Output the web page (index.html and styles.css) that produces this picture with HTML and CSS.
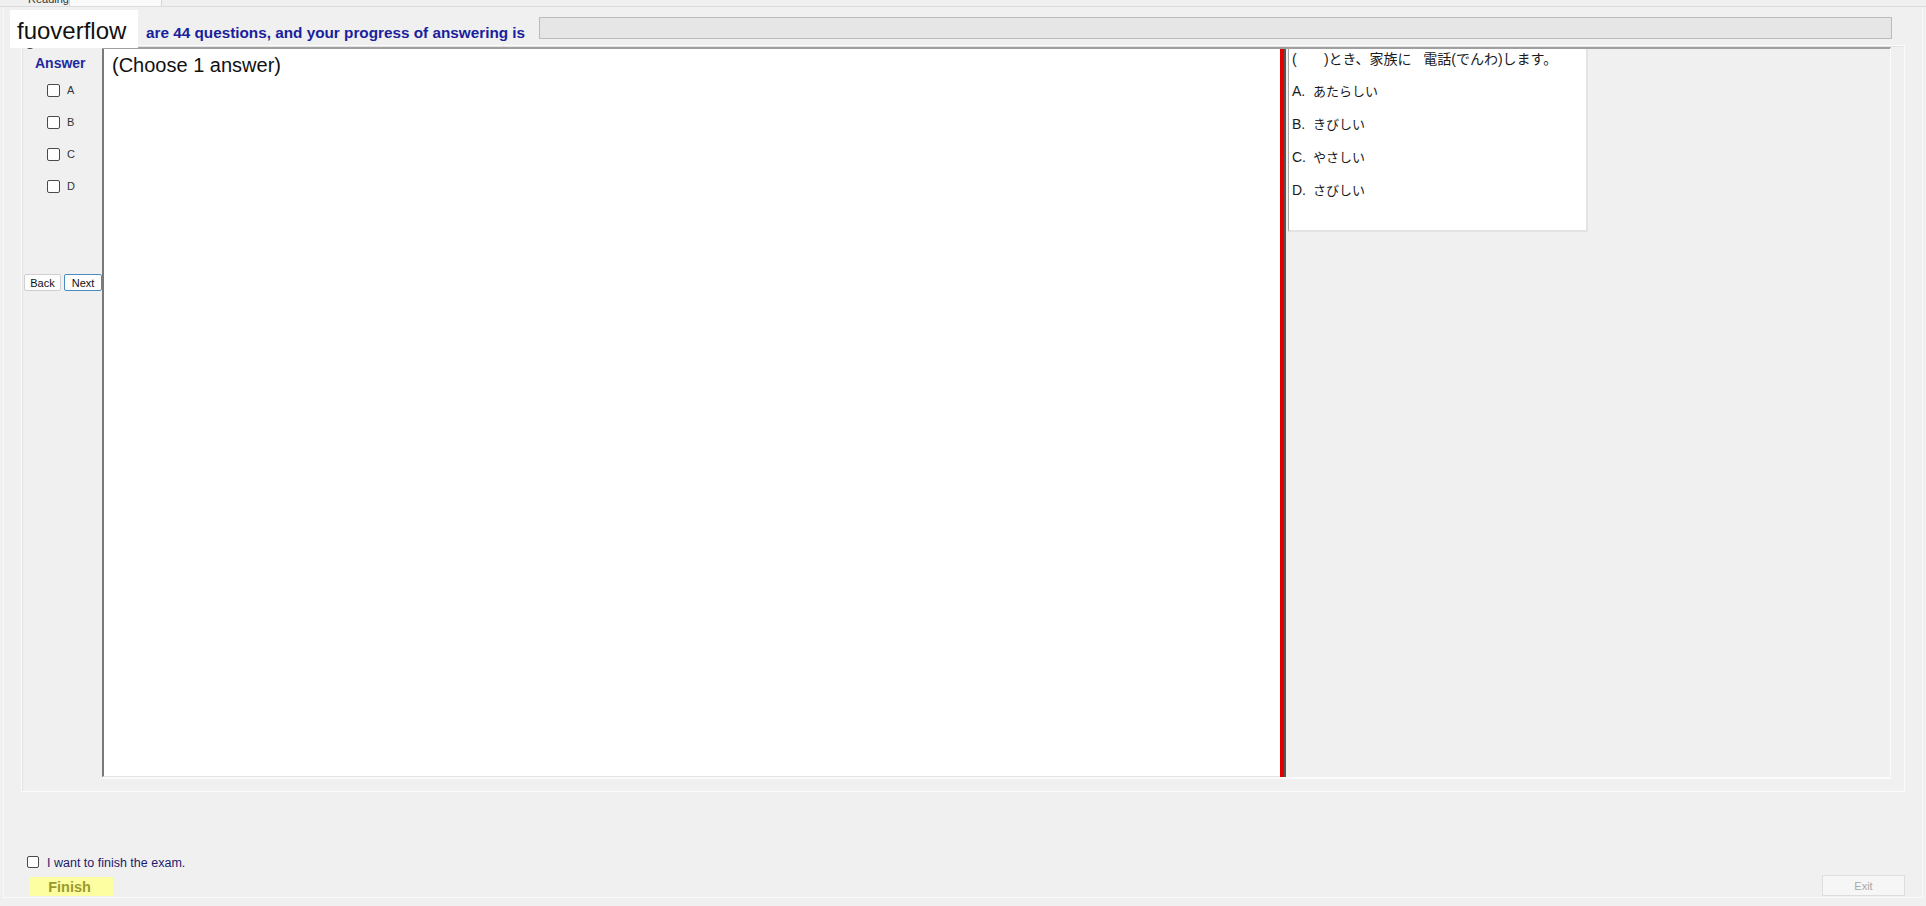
FILE: index.html
```html
<!DOCTYPE html>
<html lang="en">

<head>
    <meta charset="UTF-8">
    <meta name="viewport" content="width=device-width, initial-scale=1.0">
    <title>Exam</title>
    <link rel="stylesheet" href="styles.css">
</head>

<body>
    <div id="tabs">
        <div class="tab">Reading</div>
        <div class="tab tab-on">Vocabulary</div>
    </div>
    <div id="window">
        <div id="head">
            <div class="progress-text">are 44 questions, and your progress of answering is</div>
            <div class="progress"></div>
        </div>
        <div id="group">
            <div id="side">
                <div class="side-title">Answer</div>
                <label class="opt"><input type="checkbox"><span>A</span></label>
                <label class="opt"><input type="checkbox"><span>B</span></label>
                <label class="opt"><input type="checkbox"><span>C</span></label>
                <label class="opt"><input type="checkbox"><span>D</span></label>
                <div class="nav">
                    <button class="btn">Back</button>
                    <button class="btn btn-focus">Next</button>
                </div>
            </div>
            <div id="split">
                <div class="question">(Choose 1 answer)</div>
                <div class="splitter"></div>
                <div class="reading">
                    <div class="passage">
                        <p class="stem">(&nbsp;&nbsp;&nbsp;&nbsp;&nbsp;&nbsp;&nbsp;)とき、家族に&nbsp;&nbsp;&nbsp;電話(でんわ)します。</p>
                        <p><span class="key">A.</span>あたらしい</p>
                        <p><span class="key">B.</span>きびしい</p>
                        <p><span class="key">C.</span>やさしい</p>
                        <p><span class="key">D.</span>さびしい</p>
                    </div>
                </div>
            </div>
        </div>
        <div id="foot">
            <div class="foot-left">
                <label class="finish-check"><input type="checkbox"><span>I want to finish the exam.</span></label>
                <button class="finish">Finish</button>
            </div>
            <button class="exit" disabled>Exit</button>
        </div>
    </div>
    <div class="peek"></div>
    <div class="brand">fuoverflow</div>
</body>

</html>
```

FILE: styles.css
```css
* {
    padding: 0;
    margin: 0;
    box-sizing: border-box;
}

body {
    width: 1926px;
    height: 906px;
    overflow: hidden;
    background: #f0f0f0;
    font-family: "Liberation Sans", Arial, sans-serif;
    color: #000;
}

#tabs {
    height: 7px;
    display: flex;
    padding-left: 20px;
    overflow: hidden;
    border-bottom: 1px solid #dcdcdc;
}

.tab {
    width: 50px;
    font-size: 11px;
    line-height: 11px;
    margin-top: -6px;
    padding-left: 8px;
    color: #333;
    border-right: 1px solid #d6d6d6;
}

.tab-on {
    width: 92px;
    background: #fafafa;
    color: #fafafa;
}

#window {
    margin: 0 3px;
    height: 891px;
    border-left: 1px solid #f9f9f9;
    border-right: 1px solid #f9f9f9;
    border-bottom: 1px solid #fafafa;
}

#head {
    height: 38px;
    display: flex;
    padding: 10px 30px 0 142px;
}

.progress-text {
    margin-top: 7px;
    font-size: 15.3px;
    line-height: 17px;
    font-weight: bold;
    color: #1a1f9c;
    white-space: nowrap;
}

.progress {
    flex: 1;
    height: 22px;
    margin-left: 14px;
    background: #e6e6e6;
    border: 1px solid #bcbcbc;
}

#group {
    margin-left: 17px;
    width: 1884px;
    height: 747px;
    display: flex;
    padding: 1px 13px 12px 0;
    border: 1px solid #fbfbfb;
    box-shadow: inset 1px 1px 0 #e2e2e2;
}

#side {
    width: 80px;
    padding-top: 8px;
}

.side-title {
    font-size: 14px;
    line-height: 16px;
    font-weight: bold;
    color: #1e2aa0;
    padding-left: 13px;
    margin-bottom: 3px;
}

.opt {
    height: 32px;
    display: flex;
    align-items: center;
    padding-left: 25px;
    font-size: 11px;
    color: #333;
}

input[type="checkbox"] {
    -webkit-appearance: none;
    appearance: none;
    width: 13px;
    height: 13px;
    background: #fff;
    border: 1px solid #4a4a4a;
    border-radius: 2px;
    margin-right: 7px;
}

.nav {
    margin-top: 72px;
    padding-left: 2px;
    display: flex;
    gap: 3px;
}

.btn {
    width: 37px;
    height: 17px;
    font-family: "Liberation Sans", Arial, sans-serif;
    font-size: 11px;
    color: #111;
    background: #fdfdfd;
    border: 1px solid #cfcfcf;
    border-radius: 2px;
}

.btn-focus {
    width: 38px;
    border-color: #4b8cbf;
}

#split {
    flex: 1;
    display: flex;
    border-top: 2px solid #a0a0a0;
    border-bottom: 2px solid #fbfbfb;
    border-right: 1px solid #fbfbfb;
}

.question {
    width: 1178px;
    background: #fff;
    border-left: 2px solid #7a7a7a;
    border-bottom: 1px solid #e4e4e4;
    padding: 5px 0 0 8px;
    font-size: 20px;
    line-height: 23px;
    color: #111;
}

.splitter {
    width: 6px;
    background: #e10000;
    border-right: 2px solid #555;
}

.reading {
    flex: 1;
    padding-left: 2px;
}

.passage {
    width: 300px;
    height: 183px;
    background: #fff;
    border-left: 1px solid #a6a6a6;
    border-right: 2px solid #e3e3e3;
    border-bottom: 2px solid #e3e3e3;
    padding: 2px 0 0 3px;
    font-family: "Liberation Sans", "Noto Sans CJK JP", sans-serif;
    font-size: 13px;
    color: #1a1a1a;
}

.passage p {
    line-height: 33px;
    white-space: nowrap;
}

.passage .stem {
    font-size: 14px;
    line-height: 17px;
    margin-bottom: 7px;
}

.key {
    display: inline-block;
    width: 21px;
    font-size: 14px;
}

#foot {
    height: 106px;
    display: flex;
    justify-content: space-between;
    align-items: flex-end;
    padding: 0 17px 2px 23px;
}

.finish-check {
    height: 14px;
    display: flex;
    align-items: center;
    font-size: 12.5px;
    color: #1c1c6e;
}

.finish-check input {
    width: 12px;
    height: 12px;
    margin-right: 8px;
    margin-top: -3px;
}

.finish {
    display: block;
    margin: 7px 0 0 3px;
    width: 83px;
    height: 19px;
    padding-right: 4px;
    border: none;
    background: #fdfda2;
    font-family: "Liberation Sans", Arial, sans-serif;
    font-size: 14.5px;
    font-weight: bold;
    color: #9a9a2a;
}

.exit {
    width: 83px;
    height: 21px;
    background: #f6f6f6;
    border: 1px solid #dedede;
    font-family: "Liberation Sans", Arial, sans-serif;
    font-size: 11px;
    color: #a8a8a8;
}

.peek {
    position: absolute;
    left: 24px;
    top: 36px;
    width: 12px;
    height: 13px;
    border: 2px solid #333;
    border-radius: 50%;
}

.brand {
    position: absolute;
    left: 10px;
    top: 10px;
    width: 128px;
    height: 38px;
    background: #fff;
    padding: 3px 0 0 7px;
    font-size: 24px;
    line-height: 36px;
    color: #111;
}
```
